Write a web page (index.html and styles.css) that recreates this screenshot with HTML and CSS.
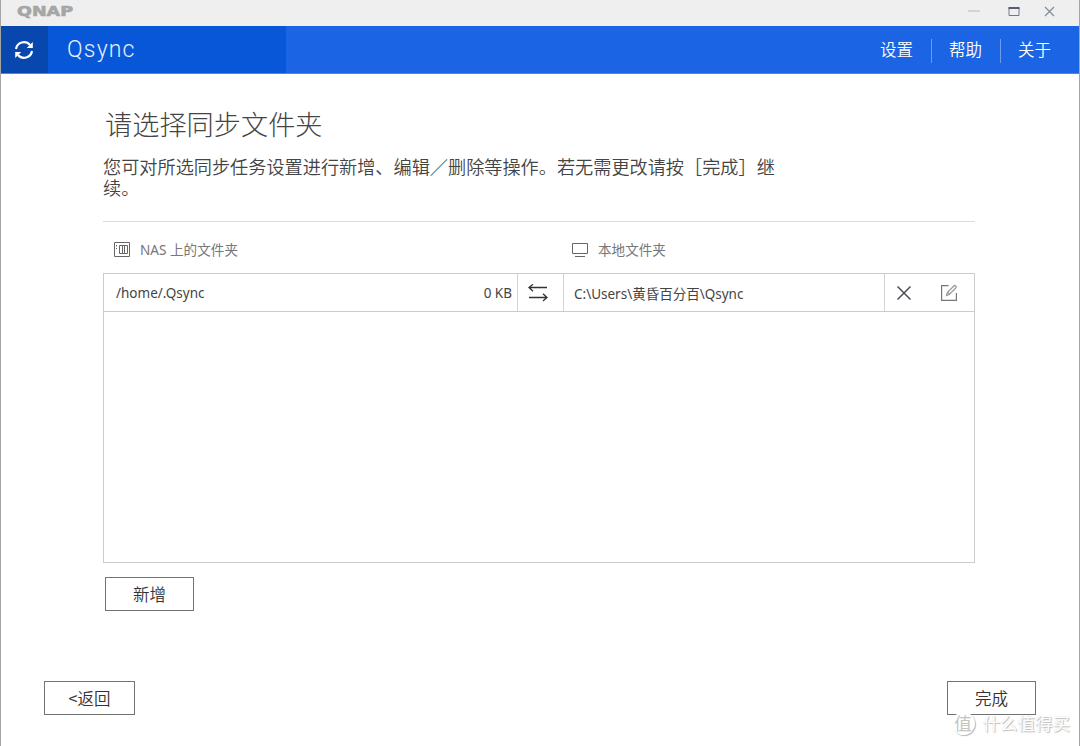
FILE: index.html
```html
<!DOCTYPE html>
<html lang="zh-CN">
<head>
  <meta charset="UTF-8">
  <meta name="viewport" content="width=device-width, initial-scale=1.0">
  <title>Qsync</title>
  <link rel="stylesheet" href="styles.css">
</head>
<body>
  <div class="window">
    <div class="titlebar">
      <div class="logo">QNAP</div>
      <svg class="controls" width="90" height="26" viewBox="0 0 90 26" fill="none">
        <path d="M0 11h12" stroke="#b5b8c3"/>
        <path d="M41 7.5v8h10v-8" stroke="#707888"/>
        <path d="M40.500 8h11" stroke="#566074" stroke-width="2"/>
        <path d="M77 7l9 9M86 7l-9 9" stroke="#858c9b" stroke-width="1.300"/>
      </svg>
    </div>

    <div class="header">
      <div class="sync">
        <svg width="20" height="20" viewBox="0 0 20 20" fill="none" stroke="#fff" stroke-width="2.200">
          <path d="M2 9A8 8 0 0 1 16 5M18 11A8 8 0 0 1 4 15"/>
          <path d="M18.800 2v6h-6zM1.200 18v-6h6z" fill="#fff" stroke="none"/>
        </svg>
      </div>
      <div class="brand">Qsync</div>
      <div class="nav">
        <a>设置</a>
        <a>帮助</a>
        <a>关于</a>
      </div>
    </div>

    <div class="content">
      <h1>请选择同步文件夹</h1>
      <p class="desc">您可对所选同步任务设置进行新增、编辑／删除等操作。若无需更改请按［完成］继<br>续。</p>

      <div class="labels">
        <div class="label nas">
          <svg width="16" height="16" viewBox="0 0 16 16" fill="none" stroke="#666">
            <path d="M.5 1.500h15v14H.5zM5.500 4.500h8v8h-8zM8.500 4.500v8M10.500 4.500v8"/>
            <path d="M2.500 4v1.500M2.500 7v1"/>
          </svg>
          NAS 上的文件夹
        </div>
        <div class="label">
          <svg width="17" height="16" viewBox="0 0 17 16" fill="none" stroke="#666">
            <path d="M1.500 2.500h15v10h-15zM4 15.500h10"/>
          </svg>
          本地文件夹
        </div>
      </div>

      <div class="list">
        <div class="row">
          <div class="cell remote"><span>/home/.Qsync</span><span class="size">0 KB</span></div>
          <div class="cell swap">
            <svg width="20" height="18" viewBox="0 0 20 18" fill="none" stroke="#333" stroke-width="1.300">
              <path d="M19 3.500H1M5 .3L1 3.500l4 3.700M1 13.500h18M15 9.800l4 3.700-4 3.400"/>
            </svg>
          </div>
          <div class="cell local">C:\Users\黄昏百分百\Qsync</div>
          <div class="cell actions">
            <svg width="14" height="14" viewBox="0 0 14 14" fill="none" stroke="#4b4b55" stroke-width="1.500">
              <path d="M.5.500l13 13M13.500.5l-13 13"/>
            </svg>
            <svg width="18" height="18" viewBox="0 0 18 18" fill="none" stroke="#777" stroke-width="1.200">
              <path d="M8.500 1.600H1.600v14.800h14.800V9"/>
              <path d="M6.500 11.500l.8-3 6.500-6.500q1-1 2 0t0 2l-6.500 6.500zM8 8.500l1.500 1.500" stroke="#999"/>
            </svg>
          </div>
        </div>
      </div>

      <button class="btn add">新增</button>
    </div>

    <div class="footer">
      <button class="btn back">&lt;返回</button>
      <button class="btn done">完成</button>
    </div>
    <div class="watermark"><span class="badge">值</span>什么值得买</div>
  </div>
</body>
</html>
```

FILE: styles.css
```css
* {
  box-sizing: border-box;
}
body {
  margin: 0;
  font-family: "Noto Sans", "Noto Sans CJK SC", sans-serif;
  color: #444;
  background: #fff;
}
svg {
  display: block;
  flex: none;
}
.window {
  position: relative;
  height: 746px;
  overflow: hidden;
  border-left: 1px solid #a5a5a5;
  border-right: 1px solid #a5a5a5;
}
.titlebar {
  height: 26px;
  display: flex;
  justify-content: space-between;
  background: #efefef;
}
.logo {
  margin-left: 16px;
  font: bold 13.5px/22px "DejaVu Sans", sans-serif;
  color: #a6a6a6;
  -webkit-text-stroke: 0.6px #a6a6a6;
  transform: scaleX(1.3);
  transform-origin: left;
}
.controls {
  margin-right: 21px;
}
.header {
  display: flex;
  height: 48px;
  background: #1b64e3;
  border-bottom: 1px solid #4c85e8;
  color: #fff;
}
.sync {
  width: 47px;
  padding-right: 2px;
  display: flex;
  align-items: center;
  justify-content: center;
  background: #0747ae;
}
.brand {
  width: 238px;
  padding-left: 19px;
  background: #0857d9;
  color: #e4eefc;
  font: 300 23px/47px Roboto, sans-serif;
  letter-spacing: 1.2px;
}
.nav {
  margin-left: auto;
  padding: 13px 28px 0 0;
  display: flex;
}
.nav a {
  height: 24px;
  font: 350 16.5px/20px "Noto Sans CJK SC", sans-serif;
}
.nav a + a {
  margin-left: 18px;
  padding-left: 17px;
  border-left: 1px solid #6c9cee;
}
.content {
  width: 872px;
  margin-left: 102px;
}
h1 {
  margin: 31px 0 0 2px;
  font: 300 27.2px/36px "Noto Sans CJK SC", sans-serif;
}
.desc {
  margin: 15px 0 0;
  height: 66px;
  border-bottom: 1px solid #dcdcdc;
  font: 350 18.17px/21px "Noto Sans CJK SC", sans-serif;
  white-space: nowrap;
}
.labels {
  display: flex;
  height: 51px;
  padding: 5px 0 0 11px;
}
.label {
  display: flex;
  align-items: center;
  height: 44px;
  gap: 10px;
  font-size: 13.6px;
  color: #777;
}
.label.nas {
  width: 457px;
}
.list {
  height: 290px;
  border: 1px solid #ccc;
}
.row {
  display: flex;
  height: 38px;
  border-bottom: 1px solid #ccc;
  font-size: 13.5px;
}
.cell {
  display: flex;
  align-items: center;
}
.cell + .cell {
  border-left: 1px solid #d3d3d3;
}
.remote {
  width: 413px;
  padding: 0 5px 0 12px;
  justify-content: space-between;
}
.swap {
  width: 46px;
  padding-left: 10px;
}
.local {
  width: 321px;
  padding-left: 10px;
}
.actions {
  flex: 1;
  padding: 0 16px 0 12px;
  justify-content: space-between;
}
.btn {
  height: 34px;
  padding: 0;
  border: 1px solid #737373;
  background: #fff;
  color: #333;
  font: 350 16.5px/32px "Noto Sans CJK SC", sans-serif;
}
.add {
  display: block;
  width: 89px;
  margin: 14px 0 0 2px;
}
.footer {
  display: flex;
  justify-content: space-between;
  margin: 70px 43px 0;
}
.back {
  width: 91px;
}
.done {
  width: 89px;
}
.watermark {
  position: absolute;
  right: 9px;
  bottom: 10px;
  display: flex;
  align-items: center;
  gap: 8px;
  font: 17.5px/26px "Noto Sans CJK SC", sans-serif;
  color: #fff;
  text-shadow: 1px 1px 1px #bbb, 0 0 1px #d5d5d5;
}
.badge {
  width: 23px;
  height: 23px;
  line-height: 21px;
  text-align: center;
  color: #c4c4c4;
  background: #fff;
  border-radius: 50%;
  box-shadow: 1px 1px 1px #bbb;
  text-shadow: none;
}
```
